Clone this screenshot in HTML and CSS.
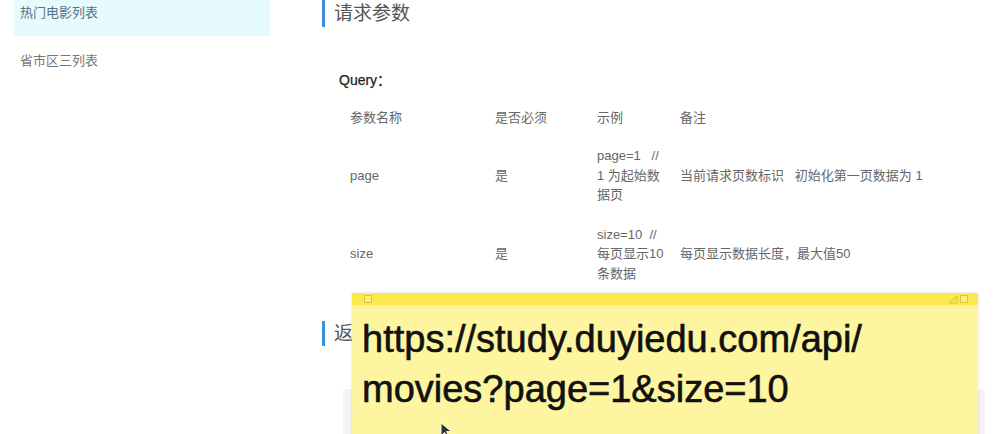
FILE: index.html
```html
<!DOCTYPE html>
<html lang="zh">
<head>
<meta charset="utf-8">
<title>接口文档</title>
<link rel="stylesheet" href="styles.css">
</head>
<body>
<div class="page">
  <aside class="sidebar">
    <div class="nav-item active">热门电影列表</div>
    <div class="nav-item">省市区三列表</div>
  </aside>
  <main class="content">
    <h2 class="section-title">请求参数</h2>
    <div class="query-label">Query：</div>
    <table class="params">
      <colgroup>
        <col class="c1"><col class="c2"><col class="c3"><col class="c4">
      </colgroup>
      <thead>
        <tr><th>参数名称</th><th>是否必须</th><th>示例</th><th>备注</th></tr>
      </thead>
      <tbody>
        <tr>
          <td>page</td>
          <td>是</td>
          <td>page=1&nbsp;&nbsp; //<br>1 为起始数<br>据页</td>
          <td>当前请求页数标识&nbsp;&nbsp; 初始化第一页数据为 1</td>
        </tr>
        <tr>
          <td>size</td>
          <td>是</td>
          <td>size=10&nbsp; //<br>每页显示10<br>条数据</td>
          <td>每页显示数据长度，最大值50</td>
        </tr>
      </tbody>
    </table>
    <h2 class="section-title second">返回参数</h2>
    <div class="code-block"></div>
  </main>
</div>

<div class="sticky-note">
  <div class="note-bar">
    <span class="note-sq"></span>
    <span class="note-controls">
      <svg width="10" height="9" viewBox="0 0 10 9"><path d="M9 1 L9 8 L1 8 Z" fill="none" stroke="#d9c63a" stroke-width="1"/></svg>
      <span class="note-sq"></span>
    </span>
  </div>
  <div class="note-text">https://study.duyiedu.com/api/<br>movies?page=1&amp;size=10</div>
</div>

<svg class="cursor" width="14" height="16" viewBox="0 0 14 16"><path d="M1 1 L1 14 L4.5 10.5 L7 15 L9 14 L6.6 9.6 L11.5 9.6 Z" fill="#333" stroke="#fff" stroke-width="1"/></svg>
</body>
</html>
```

FILE: styles.css
```css
html, body {
  margin: 0;
  padding: 0;
  background: #ffffff;
  overflow: hidden;
}
body {
  font-family: "Liberation Sans", "Noto Sans CJK SC", sans-serif;
  width: 1008px;
  height: 434px;
  position: relative;
}
.page {
  display: flex;
  align-items: flex-start;
}
.sidebar {
  width: 256px;
  margin-left: 14px;
  flex: none;
}
.nav-item {
  height: 36px;
  box-sizing: border-box;
  padding: 4px 6px 0;
  font-size: 13px;
  line-height: 18px;
  color: #777;
}
.nav-item.active {
  background: #e6fbfe;
  color: #5a7185;
}
.nav-item + .nav-item {
  padding-top: 16px;
}
.content {
  margin-left: 52px;
  flex: 1;
  position: relative;
}
.section-title {
  margin: 0;
  border-left: 3px solid #3b8fdc;
  padding-left: 9px;
  height: 27px;
  line-height: 27px;
  font-size: 19px;
  font-weight: normal;
  color: #555;
}
.section-title.second {
  margin-top: 28px;
  height: 25px;
  line-height: 25px;
}
.query-label {
  margin: 43px 0 0 17px;
  font-size: 14px;
  line-height: 20px;
  color: #222;
  font-weight: normal;
  -webkit-text-stroke: 0.25px #222;
}
.params {
  margin: 10px 0 0 18px;
  border-collapse: collapse;
  table-layout: fixed;
  width: 640px;
  font-size: 13px;
  color: #666;
}
.params col.c1 { width: 145px; }
.params col.c2 { width: 102px; }
.params col.c3 { width: 83px; }
.params th {
  text-align: left;
  font-weight: normal;
  padding: 10px 3px 10px 10px;
  line-height: 16px;
  color: #666;
}
.params td {
  padding: 10px 3px 10px 10px;
  line-height: 19.5px;
  vertical-align: middle;
  white-space: nowrap;
}
.code-block {
  margin: 43px 0 0 21px;
  width: 642px;
  height: 60px;
  background: #f4f4f5;
}
.sticky-note {
  position: absolute;
  left: 352px;
  top: 293px;
  width: 626px;
  height: 170px;
  background: #fdf59f;
  box-shadow: 0 0 3px rgba(0,0,0,0.12);
}
.note-bar {
  height: 12px;
  background: #fce84c;
  display: flex;
  align-items: center;
  justify-content: space-between;
  padding: 0 10px 0 12px;
}
.note-sq {
  display: inline-block;
  width: 6px;
  height: 6px;
  border: 1px solid #dcc73c;
  background: #fdf07a;
}
.note-controls {
  display: flex;
  align-items: center;
  gap: 2px;
}
.note-text {
  padding: 9px 0 0 10px;
  font-family: "Liberation Sans", sans-serif;
  font-size: 38px;
  line-height: 50px;
  color: #111;
  -webkit-text-stroke: 0.6px #111;
}
.cursor {
  position: absolute;
  left: 440px;
  top: 422px;
}
```
